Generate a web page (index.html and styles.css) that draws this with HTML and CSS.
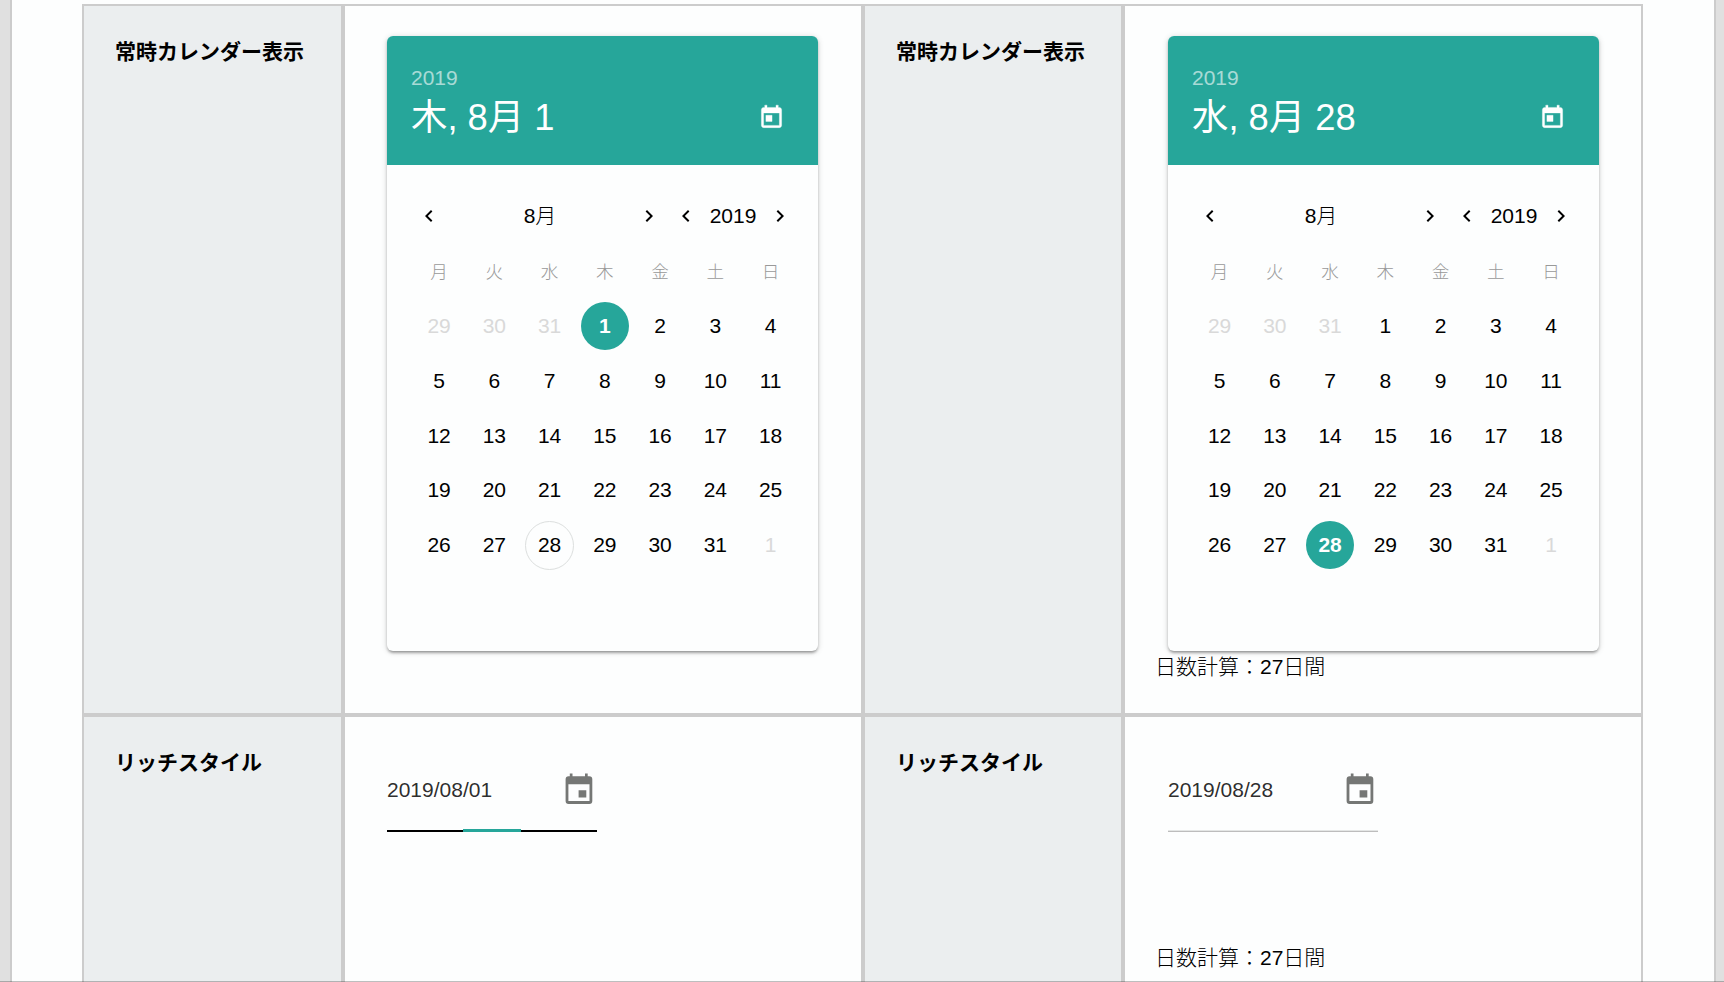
FILE: index.html
```html
<!DOCTYPE html>
<html lang="ja">
<head>
<meta charset="utf-8">
<title>カレンダー</title>
<link rel="stylesheet" href="styles.css">
</head>
<body>
<svg class="defs" aria-hidden="true">
  <symbol id="prev" viewBox="0 0 24 24"><path d="M15.4 7.4 14 6l-6 6 6 6 1.4-1.4-4.6-4.6z"/></symbol>
  <symbol id="next" viewBox="0 0 24 24"><path d="M8.6 16.6 10 18l6-6-6-6-1.4 1.4 4.6 4.6z"/></symbol>
  <symbol id="today" viewBox="0 0 24 24"><path d="M19 3h-1V1h-2v2H8V1H6v2H5c-1.1 0-2 .9-2 2v14c0 1.1.9 2 2 2h14c1.1 0 2-.9 2-2V5c0-1.1-.9-2-2-2zm0 16H5V8h14v11zM7 10h5.500v5.500H7z"/></symbol>
  <symbol id="event" viewBox="0 0 36 36"><path fill-rule="evenodd" d="M8.800 1.500h2.700v2.800h12.500V1.500h2.700v2.800h1.600a3 3 0 0 1 3 3V29a3 3 0 0 1-3 3H7.600a3 3 0 0 1-3-3V7.300a3 3 0 0 1 3-3h1.200zM7.400 12.200v16.700h21.100V12.200zM17.600 18.200h7.700v7.400h-7.700z"/></symbol>
</svg>
<main class="page">
  <div class="table">
    <div class="label">常時カレンダー表示</div>
    <div class="cell">
      <section class="card">
        <header class="card-head">
          <div><div class="year">2019</div><div class="title">木, 8月 1</div></div>
          <svg class="today"><use href="#today"/></svg>
        </header>
        <nav class="nav">
          <svg><use href="#prev"/></svg><span class="month">8月</span><svg><use href="#next"/></svg>
          <svg class="gap"><use href="#prev"/></svg><span class="nav-year">2019</span><svg><use href="#next"/></svg>
        </nav>
        <div class="days">
          <b>月</b><b>火</b><b>水</b><b>木</b><b>金</b><b>土</b><b>日</b>
          <i>29</i><i>30</i><i>31</i><span class="selected">1</span><span>2</span><span>3</span><span>4</span>
          <span>5</span><span>6</span><span>7</span><span>8</span><span>9</span><span>10</span><span>11</span>
          <span>12</span><span>13</span><span>14</span><span>15</span><span>16</span><span>17</span><span>18</span>
          <span>19</span><span>20</span><span>21</span><span>22</span><span>23</span><span>24</span><span>25</span>
          <span>26</span><span>27</span><span class="current">28</span><span>29</span><span>30</span><span>31</span><i>1</i>
        </div>
      </section>
    </div>
    <div class="label">常時カレンダー表示</div>
    <div class="cell cell-end">
      <section class="card">
        <header class="card-head">
          <div><div class="year">2019</div><div class="title">水, 8月 28</div></div>
          <svg class="today"><use href="#today"/></svg>
        </header>
        <nav class="nav">
          <svg><use href="#prev"/></svg><span class="month">8月</span><svg><use href="#next"/></svg>
          <svg class="gap"><use href="#prev"/></svg><span class="nav-year">2019</span><svg><use href="#next"/></svg>
        </nav>
        <div class="days">
          <b>月</b><b>火</b><b>水</b><b>木</b><b>金</b><b>土</b><b>日</b>
          <i>29</i><i>30</i><i>31</i><span>1</span><span>2</span><span>3</span><span>4</span>
          <span>5</span><span>6</span><span>7</span><span>8</span><span>9</span><span>10</span><span>11</span>
          <span>12</span><span>13</span><span>14</span><span>15</span><span>16</span><span>17</span><span>18</span>
          <span>19</span><span>20</span><span>21</span><span>22</span><span>23</span><span>24</span><span>25</span>
          <span>26</span><span>27</span><span class="selected">28</span><span>29</span><span>30</span><span>31</span><i>1</i>
        </div>
      </section>
      <p class="count">日数計算：27日間</p>
    </div>
    <div class="label">リッチスタイル</div>
    <div class="cell cell-field">
      <div class="field field-active"><span>2019/08/01</span><svg><use href="#event"/></svg></div>
    </div>
    <div class="label">リッチスタイル</div>
    <div class="cell cell-end cell-field">
      <div class="field"><span>2019/08/28</span><svg><use href="#event"/></svg></div>
      <p class="count count-low">日数計算：27日間</p>
    </div>
  </div>
</main>
<div class="edge"></div>
</body>
</html>
```
FILE: styles.css
```css
* { box-sizing: border-box; }
html { height: 982px; overflow: hidden; }
body {
  margin: 0;
  height: 982px;
  overflow: hidden;
  padding: 0 8px 0 10px;
  background: #e0e0e0;
  color: #000;
  font: 300 21px/30px "Liberation Sans", "Noto Sans CJK JP", sans-serif;
}
.defs { display: none; }
.page {
  height: 982px;
  overflow: hidden;
  padding: 4px 71px 0 70px;
  background: #fdfefe;
  border: solid #ccc;
  border-width: 0 2px;
}
.table {
  display: grid;
  grid-template-columns: 257px 516px 256px 516px;
  grid-template-rows: 707px 400px;
  gap: 4px;
  width: 1561px;
  padding: 2px;
  background: #ccc;
}
.label {
  padding: 31px 0 0 31px;
  background: #ebeeef;
  font-weight: 700;
}
.cell { padding: 30px 0 0 42px; background: #fdfefe; }
.cell-end { padding-left: 43px; }

.card {
  width: 431px;
  height: 615px;
  border-radius: 6px;
  overflow: hidden;
  background: #fdfefe;
  box-shadow: 0 3px 3px -2px rgba(0,0,0,.25), 0 2px 3px rgba(0,0,0,.18), 0 1px 6px rgba(0,0,0,.16);
}
.card-head {
  display: flex;
  justify-content: space-between;
  height: 129px;
  padding: 27px 33px 0 24px;
  background: #26a69a;
  color: #fff;
}
.year { opacity: .6; }
.title { padding-top: 1px; font-size: 36.4px; font-weight: 400; line-height: 48px; }
svg { display: block; flex: none; width: 24px; height: 24px; fill: currentColor; }
.today { width: 27px; height: 27px; margin-top: 41px; stroke: #fff; stroke-width: .3px; }

.nav {
  display: flex;
  align-items: center;
  height: 55px;
  margin-top: 23px;
  margin-bottom: 1px;
  padding-left: 30px;
}
.month { width: 196px; padding-left: 2px; text-align: center; }
.nav .gap { margin-left: 13px; }
.nav-year { width: 70px; text-align: center; }

.days {
  display: grid;
  grid-template-columns: repeat(7, 55.25px);
  grid-auto-rows: 54.75px;
  justify-items: center;
  align-items: center;
  padding-left: 24.5px;
}
.cell-end .days { padding-left: 24px; }
.days b { padding-top: 2px; font-weight: 300; font-size: 17.600px; color: #999; }
.days i { font-style: normal; color: #d9d9d9; }
.days .selected, .days .current {
  width: 48px;
  line-height: 48px;
  border-radius: 50%;
  text-align: center;
}
.days .selected { background: #26a69a; color: #fff; font-weight: 700; }
.days .current { width: 49px; height: 49px; line-height: 46px; border: 1px solid #dcdfde; }

.count { margin: 0 0 0 -13px; padding-top: 1px; }
.cell-field { padding-top: 49px; }
.field {
  position: relative;
  display: flex;
  align-items: flex-start;
  justify-content: space-between;
  width: 210px;
  height: 66px;
  border-bottom: 1px solid #bdbdbd;
  box-shadow: inset 0 -1px #e4e6e5;
  color: rgba(0,0,0,.84);
}
.field span { margin-top: 9px; }
.field svg { width: 36px; height: 36px; margin-top: 6px; color: #757775; }
.field-active { border-bottom: 2px solid #000; box-shadow: none; }
.field-active::after {
  content: "";
  position: absolute;
  left: 76px;
  bottom: -2px;
  width: 58px;
  height: 3px;
  background: #26a69a;
}
.count-low { margin-top: 110px; }
.edge {
  position: fixed;
  left: 0;
  right: 0;
  bottom: 0;
  height: 1px;
  background: rgba(0,0,0,.25);
}
```
